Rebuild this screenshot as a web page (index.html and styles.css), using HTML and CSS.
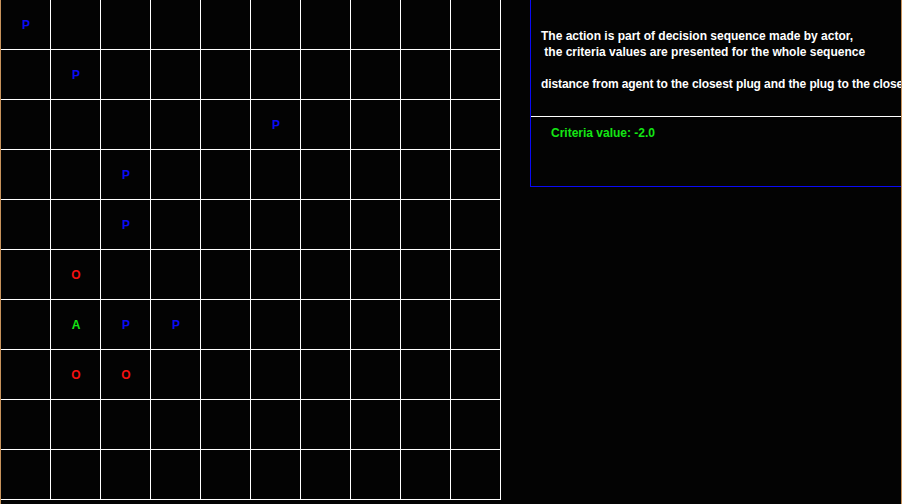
FILE: index.html
```html
<!DOCTYPE html>
<html>
<head>
<meta charset="utf-8">
<link rel="stylesheet" href="styles.css">
</head>
<body>
<div class="frame">
  <div class="grid">
    <div class="cell blue">P</div><div class="cell"></div><div class="cell"></div><div class="cell"></div><div class="cell"></div><div class="cell"></div><div class="cell"></div><div class="cell"></div><div class="cell"></div><div class="cell"></div>
    <div class="cell"></div><div class="cell blue">P</div><div class="cell"></div><div class="cell"></div><div class="cell"></div><div class="cell"></div><div class="cell"></div><div class="cell"></div><div class="cell"></div><div class="cell"></div>
    <div class="cell"></div><div class="cell"></div><div class="cell"></div><div class="cell"></div><div class="cell"></div><div class="cell blue">P</div><div class="cell"></div><div class="cell"></div><div class="cell"></div><div class="cell"></div>
    <div class="cell"></div><div class="cell"></div><div class="cell blue">P</div><div class="cell"></div><div class="cell"></div><div class="cell"></div><div class="cell"></div><div class="cell"></div><div class="cell"></div><div class="cell"></div>
    <div class="cell"></div><div class="cell"></div><div class="cell blue">P</div><div class="cell"></div><div class="cell"></div><div class="cell"></div><div class="cell"></div><div class="cell"></div><div class="cell"></div><div class="cell"></div>
    <div class="cell"></div><div class="cell red">O</div><div class="cell"></div><div class="cell"></div><div class="cell"></div><div class="cell"></div><div class="cell"></div><div class="cell"></div><div class="cell"></div><div class="cell"></div>
    <div class="cell"></div><div class="cell green">A</div><div class="cell blue">P</div><div class="cell blue">P</div><div class="cell"></div><div class="cell"></div><div class="cell"></div><div class="cell"></div><div class="cell"></div><div class="cell"></div>
    <div class="cell"></div><div class="cell red">O</div><div class="cell red">O</div><div class="cell"></div><div class="cell"></div><div class="cell"></div><div class="cell"></div><div class="cell"></div><div class="cell"></div><div class="cell"></div>
    <div class="cell"></div><div class="cell"></div><div class="cell"></div><div class="cell"></div><div class="cell"></div><div class="cell"></div><div class="cell"></div><div class="cell"></div><div class="cell"></div><div class="cell"></div>
    <div class="cell"></div><div class="cell"></div><div class="cell"></div><div class="cell"></div><div class="cell"></div><div class="cell"></div><div class="cell"></div><div class="cell"></div><div class="cell"></div><div class="cell"></div>
  </div>
  <div class="side">
    <div class="panel">
      <div class="desc">
        <div class="line">The action is part of decision sequence made by actor,</div>
        <div class="line"> the criteria values are presented for the whole sequence</div>
        <div class="line"> </div>
        <div class="line slight">distance from agent to the closest plug and the plug to the closest outlet</div>
      </div>
      <div class="sep"></div>
      <div class="value">Criteria value: -2.0</div>
    </div>
  </div>
</div>
</body>
</html>
```

FILE: styles.css
```css
html, body {
  margin: 0;
  padding: 0;
  background: #030303;
}
body {
  width: 902px;
  height: 504px;
  overflow: hidden;
  font-family: "Liberation Sans", Arial, sans-serif;
  font-weight: bold;
  font-size: 12px;
}
.frame {
  display: flex;
  align-items: flex-start;
  width: 902px;
  height: 504px;
  box-sizing: border-box;
  border-left: 1px solid #c8935c;
  border-right: 1px solid #c8935c;
  overflow: hidden;
}
.grid {
  display: grid;
  grid-template-columns: repeat(10, 50px);
  grid-auto-rows: 50px;
  width: 500px;
  flex: none;
}
.cell {
  box-sizing: border-box;
  border-right: 1px solid #ffffff;
  border-bottom: 1px solid #ffffff;
  display: flex;
  align-items: center;
  justify-content: center;
  font-size: 12px;
  font-weight: bold;
  line-height: 1;
  padding-left: 1px;
}
.blue { color: #0a0af5; }
.red { color: #f51010; }
.green { color: #14e614; }
.side {
  flex: 1;
  min-width: 0;
  margin-left: 29px;
}
.panel {
  box-sizing: border-box;
  height: 187px;
  border-left: 1px solid #0a0af5;
  border-bottom: 1px solid #0a0af5;
  overflow: hidden;
}
.desc {
  padding: 28px 0 0 10px;
  color: #ffffff;
  line-height: 16px;
}
.line {
  white-space: pre;
  height: 16px;
}
.slight {
  letter-spacing: -0.09px;
}
.sep {
  margin-top: 24px;
  height: 1px;
  background: #ffffff;
}
.value {
  margin-top: 8px;
  padding-left: 20px;
  line-height: 16px;
  color: #14e614;
  white-space: pre;
}
```
